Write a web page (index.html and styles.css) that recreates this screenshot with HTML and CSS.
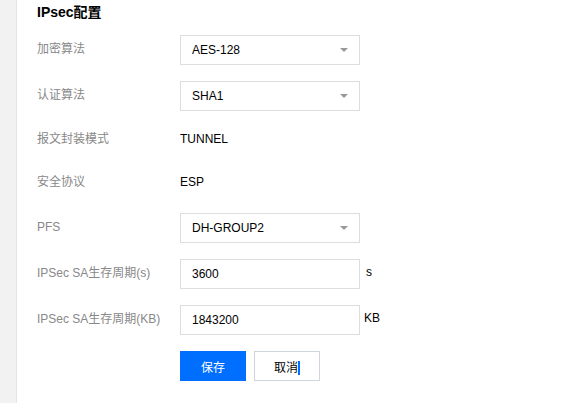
FILE: index.html
```html
<!DOCTYPE html>
<html lang="zh-CN">
<head>
<meta charset="utf-8">
<link rel="stylesheet" href="styles.css">
</head>
<body>
<div class="page">
  <aside class="side"></aside>
  <main class="content">
    <h2 class="title">IPsec配置</h2>
    <div class="row">
      <div class="label">加密算法</div>
      <div class="select"><span>AES-128</span><i class="arrow"></i></div>
    </div>
    <div class="row">
      <div class="label">认证算法</div>
      <div class="select"><span>SHA1</span><i class="arrow"></i></div>
    </div>
    <div class="row text-row">
      <div class="label">报文封装模式</div>
      <div class="value">TUNNEL</div>
    </div>
    <div class="row text-row">
      <div class="label">安全协议</div>
      <div class="value">ESP</div>
    </div>
    <div class="row">
      <div class="label">PFS</div>
      <div class="select"><span>DH-GROUP2</span><i class="arrow"></i></div>
    </div>
    <div class="row">
      <div class="label">IPSec SA生存周期(s)</div>
      <div class="input">3600</div>
      <div class="unit">s</div>
    </div>
    <div class="row">
      <div class="label">IPSec SA生存周期(KB)</div>
      <div class="input">1843200</div>
      <div class="unit unit-kb">KB</div>
    </div>
    <div class="row actions">
      <div class="label"></div>
      <button class="btn btn-primary">保存</button>
      <button class="btn btn-default">取消<span class="caret"></span></button>
    </div>
  </main>
</div>
</body>
</html>
```
FILE: styles.css
```css
* { box-sizing: border-box; }
html, body { margin: 0; padding: 0; background: #fff; }
body {
  font-family: "Liberation Sans", Arial, "Noto Sans CJK SC", sans-serif;
  font-size: 12px;
  color: #000;
  width: 564px;
  height: 403px;
  overflow: hidden;
}
.page { display: flex; height: 403px; }
.side {
  width: 17px;
  flex: none;
  background: #f2f2f2;
  border-right: 1px solid #e5e5e5;
}
.content { flex: 1; padding: 0 0 0 20px; }
.title {
  margin: 0;
  height: 35px;
  padding-top: 2px;
  font-size: 14px;
  font-weight: bold;
  line-height: 20px;
  color: #000;
}
.row {
  display: flex;
  align-items: center;
  height: 30px;
  margin-bottom: 16px;
}
.text-row { height: 27px; }
.label {
  width: 143px;
  flex: none;
  color: #888;
  line-height: 18px;
  margin-top: -3px;
}
.value { color: #000; line-height: 18px; margin-top: -3px; }
.select, .input {
  width: 180px;
  height: 30px;
  border: 1px solid #dddddd;
  padding-left: 11px;
  display: flex;
  align-items: center;
  color: #000;
}
.select span { flex: 1; }
.arrow {
  width: 0; height: 0;
  border-left: 4px solid transparent;
  border-right: 4px solid transparent;
  border-top: 4px solid #999;
  margin-right: 11px;
}
.unit { margin-left: 6px; color: #000; margin-top: -4px; }
.unit-kb { margin-left: 4px; }
.btn {
  width: 66px;
  height: 30px;
  font-family: "Liberation Sans", Arial, "Noto Sans CJK SC", sans-serif;
  font-size: 12px;
  padding: 0;
  cursor: pointer;
}
.btn-primary {
  background: #006eff;
  border: 1px solid #006eff;
  color: #fff;
  margin-right: 8px;
}
.btn-default {
  background: #fff;
  border: 1px solid #cfd5de;
  color: #000;
  position: relative;
}
.caret {
  display: inline-block;
  width: 2px;
  height: 14px;
  background: #006eff;
  vertical-align: -3px;
  margin-left: 0;
}
```
